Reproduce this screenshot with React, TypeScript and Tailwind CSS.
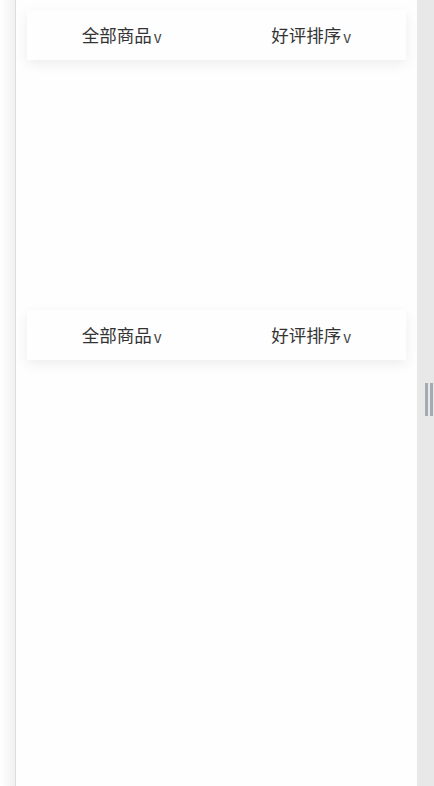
import React from 'react';

const FilterBar: React.FC = () => (
  <div className="mx-[11px] flex h-[50px] items-center bg-[#fefefe] shadow-[0_4px_12px_rgba(0,0,0,0.07)]">
    <button className="flex flex-1 items-center justify-center pt-[1px] text-[17.5px] text-[#333]">
      全部商品<span className="ml-[2px] mt-[2px] text-[15px] leading-none text-[#444]">v</span>
    </button>
    <button className="flex flex-1 items-center justify-center pt-[1px] text-[17.5px] text-[#333]">
      好评排序<span className="ml-[2px] mt-[2px] text-[15px] leading-none text-[#444]">v</span>
    </button>
  </div>
);

export default function App() {
  return (
    <div
      className="flex h-[786px] w-[434px] overflow-hidden bg-white"
      style={{ fontFamily: '"Microsoft YaHei", "Noto Sans CJK SC", "Noto Sans", sans-serif' }}
    >
      <div className="w-[15px] bg-gradient-to-r from-white to-[#f1f1f1]" />
      <div className="w-[402px] border-l border-[#dcdcdc] bg-[#fefefe]">
        <div className="h-[300px] pt-[10px]">
          <FilterBar />
        </div>
        <div className="pt-[10px]">
          <FilterBar />
        </div>
      </div>
      <div className="flex flex-1 items-center bg-[#e8e8e8] pl-[8px]">
        <div className="mt-[12px] flex gap-[2px]">
          <div className="h-[33px] w-[3px] bg-[#a4abb3]" />
          <div className="h-[33px] w-[3px] bg-[#a4abb3]" />
        </div>
      </div>
    </div>
  );
}
